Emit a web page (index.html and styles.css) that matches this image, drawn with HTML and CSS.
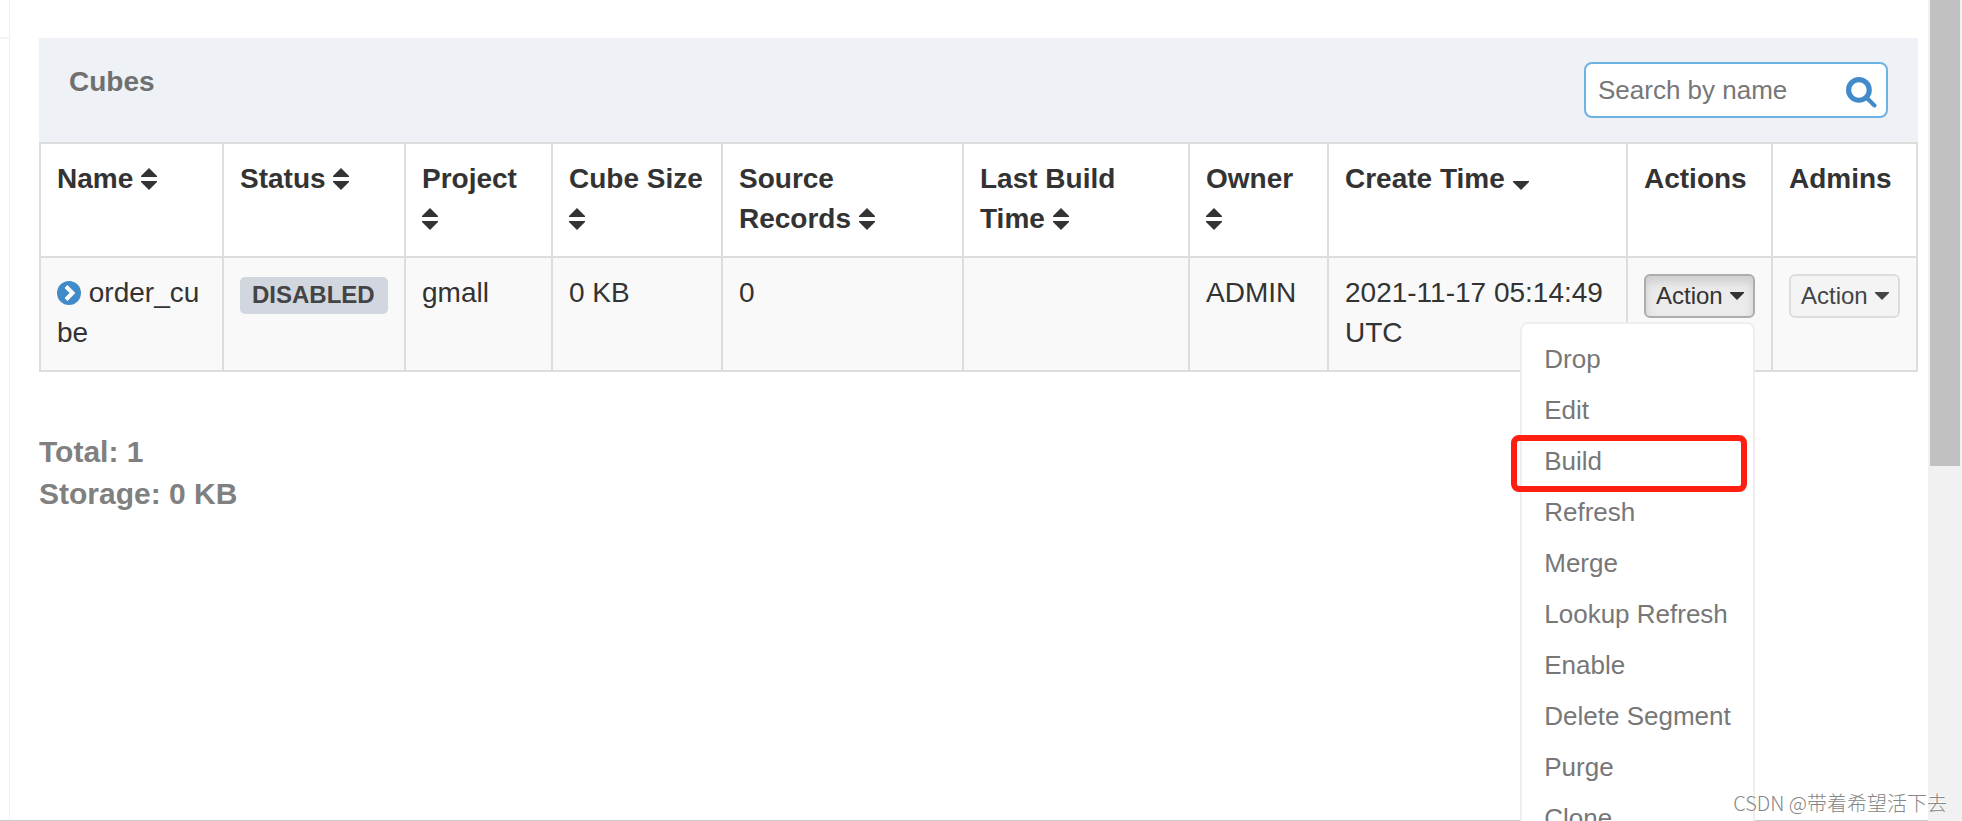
FILE: index.html
```
<!DOCTYPE html>
<html lang="en">
<head>
<meta charset="utf-8">
<title>Cubes</title>
<link rel="stylesheet" href="styles.css">
</head>
<body>
<svg class="sprite" aria-hidden="true">
  <symbol id="sort" viewBox="0 0 16 22"><path d="M8 0 16 8V9H0V8ZM0 13H16V14L8 22 0 14Z"/></symbol>
  <symbol id="sort-down" viewBox="0 0 16 22"><path d="M0 13H16V14L8 22 0 14Z"/></symbol>
  <symbol id="caret" viewBox="0 0 14 8"><path d="M0 0H14V1L7 8 0 1Z"/></symbol>
</svg>
<div class="page">
  <aside class="edge"></aside>
  <main class="content">
    <header class="panel-head">
      <h1 class="panel-title">Cubes</h1>
      <div class="search">
        <input class="search-input" type="text" placeholder="Search by name" aria-label="Search by name">
        <svg class="search-icon" viewBox="0 0 30 30" aria-hidden="true"><circle cx="12.5" cy="12.5" r="10"/><path d="M20 20 27.5 27.5"/></svg>
      </div>
    </header>
    <table class="cubes">
      <colgroup>
        <col class="c-name"><col class="c-status"><col class="c-project"><col class="c-size"><col class="c-records"><col class="c-build"><col class="c-owner"><col class="c-create"><col class="c-action"><col class="c-action">
      </colgroup>
      <thead>
        <tr>
          <th>Name <svg class="sort"><use href="#sort"/></svg></th>
          <th>Status <svg class="sort"><use href="#sort"/></svg></th>
          <th>Project <svg class="sort"><use href="#sort"/></svg></th>
          <th>Cube Size <svg class="sort"><use href="#sort"/></svg></th>
          <th>Source Records <svg class="sort"><use href="#sort"/></svg></th>
          <th>Last Build Time <svg class="sort"><use href="#sort"/></svg></th>
          <th>Owner <svg class="sort"><use href="#sort"/></svg></th>
          <th>Create Time <svg class="sort"><use href="#sort-down"/></svg></th>
          <th>Actions</th>
          <th>Admins</th>
        </tr>
      </thead>
      <tbody>
        <tr>
          <td class="cube-name"><svg class="expand" viewBox="0 0 24 24" aria-hidden="true"><circle cx="12" cy="12" r="12"/><path d="M9 5.5 15.5 12 9 18.5"/></svg> order_cube</td>
          <td><span class="badge">DISABLED</span></td>
          <td>gmall</td>
          <td>0 KB</td>
          <td>0</td>
          <td></td>
          <td>ADMIN</td>
          <td>2021-11-17 05:14:49 UTC</td>
          <td>
            <div class="dropdown">
              <button class="btn btn-open" type="button" aria-expanded="true">Action <svg class="caret"><use href="#caret"/></svg></button>
              <ul class="menu">
                <li><a href="#">Drop</a></li>
                <li><a href="#">Edit</a></li>
                <li class="marked"><a href="#">Build</a></li>
                <li><a href="#">Refresh</a></li>
                <li><a href="#">Merge</a></li>
                <li><a href="#">Lookup Refresh</a></li>
                <li><a href="#">Enable</a></li>
                <li><a href="#">Delete Segment</a></li>
                <li><a href="#">Purge</a></li>
                <li><a href="#">Clone</a></li>
              </ul>
            </div>
          </td>
          <td>
            <div class="dropdown">
              <button class="btn" type="button">Action <svg class="caret"><use href="#caret"/></svg></button>
            </div>
          </td>
        </tr>
      </tbody>
    </table>
    <div class="totals">
      <div>Total: 1</div>
      <div>Storage: 0 KB</div>
    </div>
  </main>
  <div class="scrollbar"><div class="thumb"></div></div>
</div>
<div class="watermark">CSDN @带着希望活下去</div>
</body>
</html>
```

FILE: styles.css
```
* {
  box-sizing: border-box;
}

body {
  margin: 0;
  height: 100vh;
  overflow: hidden;
  position: relative;
  background: #fff;
  color: #333;
  font: 28px/40px "Liberation Sans", Arial, sans-serif;
}

.sprite {
  display: none;
}

.page {
  display: flex;
  height: 100%;
}

.edge {
  flex: none;
  width: 10px;
  border-right: 1px solid #f2f2f2;
  border-bottom: 1px solid #ccc;
}

.edge::before {
  content: "";
  display: block;
  height: 37px;
  border-bottom: 2px solid #f3f3f3;
}

.content {
  flex: 1;
  min-width: 0;
  padding: 38px 10px 0 29px;
  border-bottom: 1px solid #ccc;
}

.panel-head {
  display: flex;
  justify-content: space-between;
  align-items: flex-start;
  padding: 24px 30px;
  background: #eef1f6;
}

.panel-title {
  margin: 0;
  font-size: 28px;
  line-height: 40px;
  color: #707070;
}

.search {
  position: relative;
  width: 304px;
}

.search-input {
  display: block;
  width: 100%;
  height: 56px;
  padding: 0 48px 0 12px;
  border: 2px solid #6cb2e2;
  border-radius: 8px;
  outline: 0;
  background: #fff;
  font: 26px "Liberation Sans", Arial, sans-serif;
}

.search-input::placeholder {
  color: #777;
}

.search-icon {
  position: absolute;
  top: 15px;
  right: 11px;
  width: 31px;
  height: 31px;
  fill: none;
  stroke: #428bca;
  stroke-width: 5;
  stroke-linecap: round;
}

.search-icon path {
  stroke-width: 4;
}

.cubes {
  width: 100%;
  table-layout: fixed;
  border-collapse: collapse;
}

.c-name { width: 183px; }
.c-status { width: 182px; }
.c-project { width: 147px; }
.c-size { width: 170px; }
.c-records { width: 241px; }
.c-build { width: 226px; }
.c-owner { width: 139px; }
.c-create { width: 299px; }
.c-action { width: 145px; }

.cubes th,
.cubes td {
  padding: 15px 16px 17px;
  border: 2px solid #ddd;
  text-align: left;
  vertical-align: top;
}

.cubes tbody tr {
  background: #f9f9f9;
}

.sort {
  width: 16px;
  height: 22px;
  vertical-align: -2px;
  fill: #333;
}

.cube-name {
  word-break: break-all;
}

.expand {
  width: 24px;
  height: 24px;
  vertical-align: -3px;
  fill: #428bca;
}

.expand path {
  fill: none;
  stroke: #fff;
  stroke-width: 4;
}

.badge {
  display: inline-block;
  margin-top: 4px;
  padding: 0 13px 2px 12px;
  border-radius: 5px;
  background: #d1d6df;
  color: #444;
  font-size: 24px;
  font-weight: bold;
  line-height: 35px;
  vertical-align: top;
}

.dropdown {
  position: relative;
  width: max-content;
}

.btn {
  display: flex;
  align-items: center;
  gap: 7px;
  height: 44px;
  margin: 0;
  padding: 0 9px 0 10px;
  border: 2px solid #ddd;
  border-radius: 6px;
  background: #f4f4f4;
  color: #444;
  font: 24px "Liberation Sans", Arial, sans-serif;
}

.dropdown {
  padding-top: 1px;
}

.btn-open {
  border-color: #adadad;
  background: #ebebeb;
  box-shadow: inset 0 6px 10px rgba(0, 0, 0, 0.125);
  color: #333;
}

.caret {
  width: 14px;
  height: 8px;
  fill: currentColor;
}

.menu {
  position: absolute;
  z-index: 1;
  top: 49px;
  right: 0;
  margin: 0;
  padding: 10px 0;
  border: 2px solid #eee;
  border-radius: 8px;
  background: #fff;
  list-style: none;
  font-size: 26px;
  line-height: 37px;
  white-space: nowrap;
}

.menu a {
  display: block;
  padding: 7px 22px;
  color: #777;
  text-decoration: none;
}

.marked {
  position: relative;
}

.marked::after {
  content: "";
  position: absolute;
  inset: -1px 6px -5px -11px;
  border: 6px solid #ff1f10;
  border-radius: 8px;
}

.totals {
  margin-top: 59px;
  color: #808080;
  font-size: 30px;
  font-weight: bold;
  line-height: 42px;
}

.scrollbar {
  flex: none;
  width: 34px;
  padding: 0 2px;
  background: #f1f1f1;
}

.thumb {
  height: 466px;
  background: #c1c1c1;
}

.watermark {
  position: absolute;
  z-index: 2;
  right: 15px;
  bottom: 3px;
  color: #868686;
  font: 20px/30px "Noto Sans CJK SC", sans-serif;
  font-weight: 300;
  text-shadow: -1px -1px 0 #fff;
}
```
